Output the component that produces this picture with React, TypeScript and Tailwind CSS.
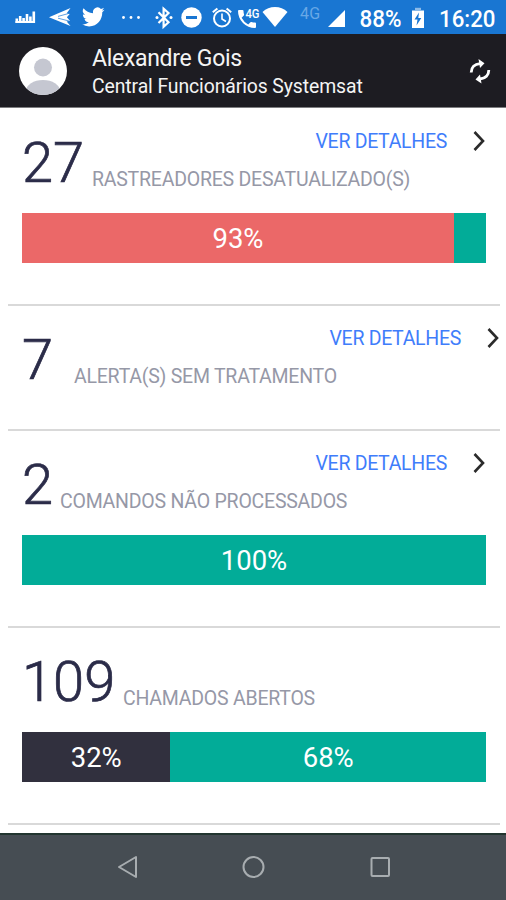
import type { ReactNode } from "react";

interface Segment {
  value: number;
  width: number;
  className: string;
}

interface Indicator {
  count: number;
  label: string;
  countClass: string;
  linkClass?: string;
  segments?: Segment[];
}

const indicators: Indicator[] = [
  {
    count: 27,
    label: "RASTREADORES DESATUALIZADO(S)",
    countClass: "w-[70px]",
    linkClass: "pr-[14px]",
    segments: [
      { value: 93, width: 93.1, className: "bg-[#eb6868]" },
      { value: 7, width: 6.9, className: "bg-[#02ac98]" },
    ],
  },
  {
    count: 7,
    label: "ALERTA(S) SEM TRATAMENTO",
    countClass: "w-[52px]",
    linkClass: "pr-0",
  },
  {
    count: 2,
    label: "COMANDOS NÃO PROCESSADOS",
    countClass: "w-[38px]",
    linkClass: "pr-[14px]",
    segments: [{ value: 100, width: 100, className: "bg-[#02ac98]" }],
  },
  {
    count: 109,
    label: "CHAMADOS ABERTOS",
    countClass: "w-[101px]",
    segments: [
      { value: 32, width: 32, className: "bg-[#31303e]" },
      { value: 68, width: 68, className: "bg-[#02ac98]" },
    ],
  },
];

function StatusBar() {
  return (
    <div className="h-[34px] shrink-0 bg-[#1976d2] text-white">
      <svg width="506" height="34" viewBox="0 0 506 34" fill="#fff">
        {/* equalizer */}
        <path d="M15.5 18.5h2.6V23h-2.6zM18.9 16h2.6v7h-2.6zM22.3 18h2.6v5h-2.6zM25.7 14h2.6v9h-2.6zM29.1 16.5h2.6V23h-2.6zM32.5 11.5h2.6V23h-2.6z" />
        <path d="M15.5 21h19v2h-19z" />
        {/* paper plane */}
        <path d="M49 17.3L70.5 8l-3.8 5.2 3 .8-2.8 3.3 3 3.500-3.200.6 3.800 4.600z" />
        <path d="M58 16.4l11-3M58 18.2l11 2.8" stroke="#1976d2" strokeWidth="0.700" />
        {/* twitter */}
        <path
          transform="translate(82 5.200) scale(.94 .98)"
          d="M23.950 4.570a10 10 0 0 1-2.820.780 4.960 4.960 0 0 0 2.160-2.720c-.950.550-2 .950-3.130 1.180a4.920 4.920 0 0 0-8.380 4.480C7.690 8.090 4.070 6.130 1.640 3.160a4.920 4.920 0 0 0 1.520 6.570 4.900 4.900 0 0 1-2.230-.610v.060a4.920 4.920 0 0 0 3.950 4.830 5 5 0 0 1-2.210.080 4.940 4.940 0 0 0 4.600 3.420A9.870 9.870 0 0 1 0 19.540a13.990 13.990 0 0 0 7.550 2.210c9.050 0 14-7.500 14-13.980 0-.210 0-.420-.020-.630a9.940 9.940 0 0 0 2.420-2.570z"
        />
        <circle cx="123.500" cy="17.500" r="1.400" />
        <circle cx="131" cy="17.500" r="1.400" />
        <circle cx="138.500" cy="17.500" r="1.400" />
        {/* bluetooth */}
        <path d="M158.500 12.300l10 10-4.900 4.400V8.600l4.900 4.400-10 10" fill="none" stroke="#fff" strokeWidth="2.200" />
        <circle cx="157" cy="17.600" r="1.500" />
        <circle cx="171" cy="17.600" r="1.500" />
        {/* do not disturb */}
        <circle cx="191.500" cy="17.500" r="10.200" />
        <path d="M186 16h11v3h-11z" fill="#1976d2" />
        {/* alarm */}
        <g fill="none" stroke="#fff" strokeWidth="2">
          <circle cx="222" cy="18.500" r="8" />
          <path d="M222 13.500v5.500l4 2.500" strokeWidth="1.600" />
          <path d="M212.800 12.200l4.600-3.800M231.200 12.200l-4.600-3.800" />
        </g>
        {/* call over 4G */}
        <path
          transform="translate(235 7)"
          d="M6.620 10.790a15.150 15.150 0 0 0 6.590 6.590l2.200-2.200a1 1 0 0 1 1.020-.240 11.400 11.400 0 0 0 3.570.570 1 1 0 0 1 1 1V20a1 1 0 0 1-1 1A17 17 0 0 1 3 4a1 1 0 0 1 1-1h3.500a1 1 0 0 1 1 1c0 1.250.200 2.450.570 3.570a1 1 0 0 1-.250 1.020z"
        />
        <text
          x="245.500"
          y="18"
          fontSize="12.500"
          fontWeight="500"
          fontFamily="Roboto, sans-serif"
          textLength="14"
          lengthAdjust="spacingAndGlyphs"
        >
          4G
        </text>
        {/* wifi */}
        <path d="M262.500 12a18 18 0 0 1 25 0L275 27z" />
        <text x="300" y="18.700" fontSize="16" fontFamily="Roboto, sans-serif" fill="#68a8e6" letterSpacing=".2">
          4G
        </text>
        {/* signal */}
        <path d="M328 27h17V10z" />
        <text
          x="359.500"
          y="26.500"
          fontSize="23.500"
          fontWeight="500"
          fontFamily="Roboto, sans-serif"
          textLength="42"
          lengthAdjust="spacingAndGlyphs"
        >
          88%
        </text>
        {/* battery */}
        <path d="M412 10.500h12V28h-12z" />
        <path d="M415 7.800h6v2.700h-6z" fill="#8dbbe8" />
        <path d="M419 12.500l-4.500 7h3l-1 6 4.800-7.500h-3z" fill="#1976d2" />
        <text
          x="439"
          y="26.500"
          fontSize="23.500"
          fontWeight="500"
          fontFamily="Roboto, sans-serif"
          textLength="56.500"
          lengthAdjust="spacingAndGlyphs"
        >
          16:20
        </text>
      </svg>
    </div>
  );
}

function Header() {
  return (
    <header className="flex h-[74px] shrink-0 items-center border-b border-[#7d7d80] bg-[#1d1c22] pl-[19px] pr-[14px] text-[#f4f4f4]">
      <svg className="shrink-0" width="48" height="48" viewBox="0 0 48 48">
        <defs>
          <clipPath id="avatar">
            <circle cx="24" cy="24" r="24" />
          </clipPath>
        </defs>
        <g clipPath="url(#avatar)">
          <path d="M0 0h48v48H0z" fill="#fff" />
          <circle cx="24" cy="20.500" r="9" fill="#c5c7d1" />
          <ellipse cx="24" cy="44" rx="17" ry="11" fill="#c5c7d1" />
        </g>
      </svg>
      <div className="ml-[25px] flex-1 pt-[5px]">
        <div className="text-[23px] leading-[28px] tracking-[-0.3px]">Alexandre Gois</div>
        <div className="text-[19.4px] leading-[28px] tracking-[-0.1px]">Central Funcionários Systemsat</div>
      </div>
      <svg width="24" height="26" viewBox="0 0 24 26" fill="none" stroke="#fff" strokeWidth="2.800">
        <path d="M3.200 14.500C3.200 9.500 6.500 6 12 5.600" />
        <path d="M20.800 12C20.800 17 17.500 20.500 12 21" />
        <path d="M10.500 1l6 4.200-4.500 4.800zM13.500 25.600l-6-4.200 4.500-4.800z" fill="#fff" stroke="none" />
      </svg>
    </header>
  );
}

function DetailsLink({ className }: { className: string }) {
  return (
    <a className={`flex items-center justify-end ${className}`}>
      <span className="pt-0.5 text-[19.5px] leading-[24px] tracking-[-0.3px] text-[#3f7dfb]">VER DETALHES</span>
      <svg className="ml-[25px]" width="14" height="22" viewBox="0 0 14 22" fill="none">
        <path d="M2.500 2l8.500 9-8.500 9" stroke="#2b2b2b" strokeWidth="2.600" />
      </svg>
    </a>
  );
}

function IndicatorCard({ item }: { item: Indicator }) {
  return (
    <section
      className={`ml-2 mr-[6px] shrink-0 border-b-2 border-[#d9d9d9] pl-[14px] ${item.segments ? "h-[197px]" : "h-[125px]"}`}
    >
      <div className="grid h-[104px] grid-cols-[auto_1fr] grid-rows-[54px_50px]">
        <div
          className={`row-span-2 pt-[21px] text-[56px] font-light leading-[66px] text-[#2b2c49] [-webkit-text-stroke:0.7px_#2b2c49] ${item.countClass}`}
        >
          {item.count}
        </div>
        <div className="pt-[19px]">{item.linkClass && <DetailsLink className={item.linkClass} />}</div>
        <div className="pt-[5px] text-[19.5px] leading-[24px] tracking-[-0.23px] text-[#9698a7]">{item.label}</div>
      </div>
      {item.segments && <Bar segments={item.segments} />}
    </section>
  );
}

function Bar({ segments }: { segments: Segment[] }) {
  return (
    <div className="mr-[14px] flex h-[50px] text-[27.5px] text-white">
      {segments.map((s) => (
        <div
          key={s.value}
          className={`flex items-center justify-center pt-0.5 ${s.className}`}
          style={{ width: `${s.width}%` }}
        >
          {s.value > 10 && `${s.value}%`}
        </div>
      ))}
    </div>
  );
}

function NavBar({ children }: { children: ReactNode }) {
  return (
    <nav className="mt-auto h-[67px] shrink-0 border-t-2 border-[#22352f] bg-[#464d53]">
      <svg width="506" height="65" viewBox="0 0 506 65" fill="none" stroke="#a8adb0" strokeWidth="2">
        {children}
      </svg>
    </nav>
  );
}

export default function App() {
  return (
    <div className="flex h-[900px] w-[506px] flex-col overflow-hidden bg-white font-['Roboto',sans-serif]">
      <StatusBar />
      <Header />
      <main className="pt-px">
        {indicators.map((item) => (
          <IndicatorCard key={item.label} item={item} />
        ))}
      </main>
      <NavBar>
        <path d="M136 22v20l-17-10z" strokeLinejoin="round" />
        <circle cx="253.500" cy="32" r="10" />
        <rect x="371.500" y="23" width="17.500" height="18" rx="1" />
      </NavBar>
    </div>
  );
}
